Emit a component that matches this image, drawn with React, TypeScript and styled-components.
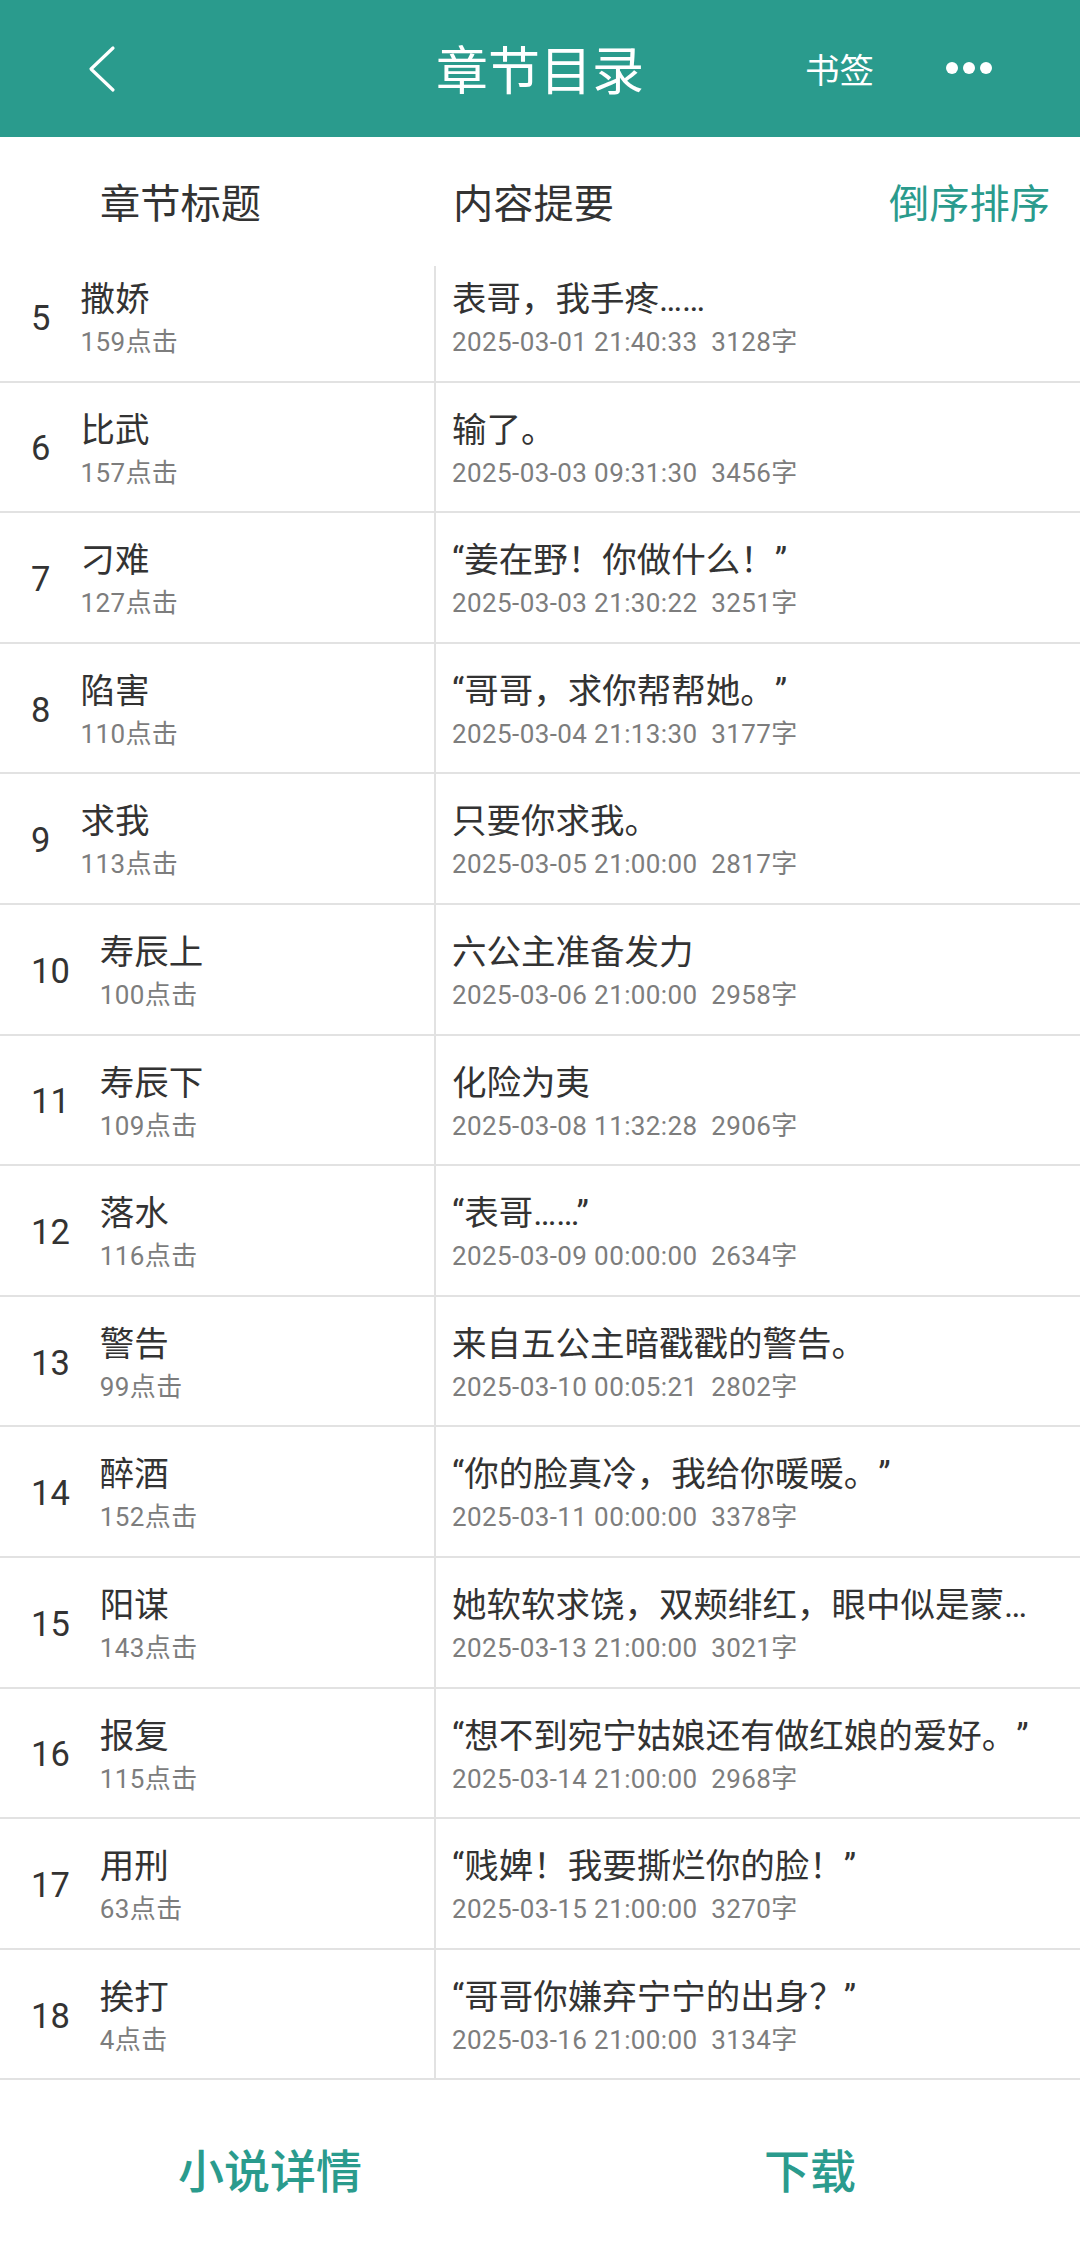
import React from "react";
import styled, { createGlobalStyle } from "styled-components";

const TEAL = "#2a9b8d";

const Global = createGlobalStyle`
  html, body { margin: 0; padding: 0; background: #fff; }
  body { font-family: Roboto, "Noto Sans CJK SC", sans-serif; -webkit-font-smoothing: antialiased; }
  * { box-sizing: border-box; }
`;

const Page = styled.div`
  width: 1080px;
  height: 2256px;
  display: flex;
  flex-direction: column;
  background: #fff;
  overflow: hidden;
`;

const TopBar = styled.header`
  height: 137px;
  flex: none;
  background: ${TEAL};
  display: grid;
  grid-template-columns: 1fr auto 1fr;
  align-items: center;
  color: #fff;
`;

const BackButton = styled.div`
  padding-left: 88px;
  display: flex;
  align-items: center;
`;

const Title = styled.h1`
  margin: 0;
  font-family: "Noto Sans CJK SC", sans-serif;
  font-weight: 400;
  font-size: 52px;
  line-height: 1.4;
`;

const Actions = styled.div`
  display: flex;
  justify-content: flex-end;
  align-items: center;
  gap: 72px;
  padding-right: 88px;
`;

const ActionText = styled.span`
  font-family: "Noto Sans CJK SC", sans-serif;
  font-size: 34.5px;
  line-height: 1.4;
`;

const Dots = styled.div`
  display: flex;
  gap: 5px;
`;

const Dot = styled.span`
  width: 12px;
  height: 12px;
  border-radius: 50%;
  background: #fff;
`;

const ColumnHead = styled.div`
  height: 129px;
  flex: none;
  display: grid;
  grid-template-columns: 436px 1fr;
  align-items: center;
`;

const HeadLabel = styled.span<{ $accent?: boolean }>`
  font-family: "Noto Sans CJK SC", sans-serif;
  font-size: 40.25px;
  color: ${(p) => (p.$accent ? TEAL : "#333")};
  line-height: 1.4;
`;

const HeadLeft = styled.div`
  padding-left: 100px;
`;

const HeadRight = styled.div`
  display: flex;
  justify-content: space-between;
  padding-left: 17px;
  padding-right: 30px;
`;

const ListViewport = styled.div`
  flex: none;
  height: 1814px;
  overflow: hidden;
`;

const List = styled.div`
  margin-top: -14px;
`;

const Row = styled.div`
  height: 130.6px;
  display: grid;
  grid-template-columns: 436px 1fr;
  border-bottom: 2px solid #e2e2e2;
`;

const TitleCell = styled.div`
  border-right: 2px solid #e2e2e2;
  display: flex;
  align-items: center;
  gap: 30px;
  padding-left: 31px;
`;

const Num = styled.span`
  font-size: 34.5px;
  color: #333;
  line-height: 1.3;
  padding-top: 4px;
`;

const Stack = styled.div`
  display: flex;
  flex-direction: column;
  align-self: flex-start;
  padding-top: 22px;
  min-width: 0;
`;

const Main = styled.div`
  font-family: Roboto, "Noto Sans CJK SC", sans-serif;
  font-size: 34.5px;
  line-height: 50px;
  color: #333;
  white-space: nowrap;
  overflow: hidden;
  text-overflow: ellipsis;
  text-spacing-trim: space-all;
`;

const Sub = styled.div`
  font-family: Roboto, "Noto Sans CJK SC", sans-serif;
  font-size: 26px;
  line-height: 36px;
  letter-spacing: 0.4px;
  color: #7d7d7d;
  white-space: pre;
`;

const SummaryCell = styled(Stack)`
  padding-left: 16px;
  padding-right: 22px;
`;

const Footer = styled.footer`
  flex: 1;
  display: flex;
  align-items: center;
`;

const FooterButton = styled.div`
  flex: 1;
  text-align: center;
  font-family: "Noto Sans CJK SC", sans-serif;
  font-weight: 500;
  font-size: 46px;
  color: ${TEAL};
  line-height: 1.4;
`;

type Chapter = {
  n: number;
  title: string;
  clicks: number;
  summary: string;
  date: string;
  words: number;
};

const chapters: Chapter[] = [
  { n: 5, title: "撒娇", clicks: 159, summary: "表哥，我手疼……", date: "2025-03-01 21:40:33", words: 3128 },
  { n: 6, title: "比武", clicks: 157, summary: "输了。", date: "2025-03-03 09:31:30", words: 3456 },
  { n: 7, title: "刁难", clicks: 127, summary: "“姜在野！你做什么！”", date: "2025-03-03 21:30:22", words: 3251 },
  { n: 8, title: "陷害", clicks: 110, summary: "“哥哥，求你帮帮她。”", date: "2025-03-04 21:13:30", words: 3177 },
  { n: 9, title: "求我", clicks: 113, summary: "只要你求我。", date: "2025-03-05 21:00:00", words: 2817 },
  { n: 10, title: "寿辰上", clicks: 100, summary: "六公主准备发力", date: "2025-03-06 21:00:00", words: 2958 },
  { n: 11, title: "寿辰下", clicks: 109, summary: "化险为夷", date: "2025-03-08 11:32:28", words: 2906 },
  { n: 12, title: "落水", clicks: 116, summary: "“表哥……”", date: "2025-03-09 00:00:00", words: 2634 },
  { n: 13, title: "警告", clicks: 99, summary: "来自五公主暗戳戳的警告。", date: "2025-03-10 00:05:21", words: 2802 },
  { n: 14, title: "醉酒", clicks: 152, summary: "“你的脸真冷，我给你暖暖。”", date: "2025-03-11 00:00:00", words: 3378 },
  { n: 15, title: "阳谋", clicks: 143, summary: "她软软求饶，双颊绯红，眼中似是蒙上了一层水雾", date: "2025-03-13 21:00:00", words: 3021 },
  { n: 16, title: "报复", clicks: 115, summary: "“想不到宛宁姑娘还有做红娘的爱好。”", date: "2025-03-14 21:00:00", words: 2968 },
  { n: 17, title: "用刑", clicks: 63, summary: "“贱婢！我要撕烂你的脸！”", date: "2025-03-15 21:00:00", words: 3270 },
  { n: 18, title: "挨打", clicks: 4, summary: "“哥哥你嫌弃宁宁的出身？”", date: "2025-03-16 21:00:00", words: 3134 },
];

export default function App() {
  return (
    <Page>
      <Global />
      <TopBar>
        <BackButton>
          <svg width="28" height="48" viewBox="0 0 28 48" fill="none">
            <polyline points="25,3 3,24 25,45" stroke="#fff" strokeWidth="3.2" strokeLinecap="round" strokeLinejoin="round" />
          </svg>
        </BackButton>
        <Title>章节目录</Title>
        <Actions>
          <ActionText>书签</ActionText>
          <Dots>
            <Dot />
            <Dot />
            <Dot />
          </Dots>
        </Actions>
      </TopBar>
      <ColumnHead>
        <HeadLeft>
          <HeadLabel>章节标题</HeadLabel>
        </HeadLeft>
        <HeadRight>
          <HeadLabel>内容提要</HeadLabel>
          <HeadLabel $accent>倒序排序</HeadLabel>
        </HeadRight>
      </ColumnHead>
      <ListViewport>
        <List>
          {chapters.map((c) => (
            <Row key={c.n}>
              <TitleCell>
                <Num>{c.n}</Num>
                <Stack>
                  <Main>{c.title}</Main>
                  <Sub>{c.clicks}点击</Sub>
                </Stack>
              </TitleCell>
              <SummaryCell>
                <Main>{c.summary}</Main>
                <Sub>{`${c.date}  ${c.words}字`}</Sub>
              </SummaryCell>
            </Row>
          ))}
        </List>
      </ListViewport>
      <Footer>
        <FooterButton>小说详情</FooterButton>
        <FooterButton>下载</FooterButton>
      </Footer>
    </Page>
  );
}
